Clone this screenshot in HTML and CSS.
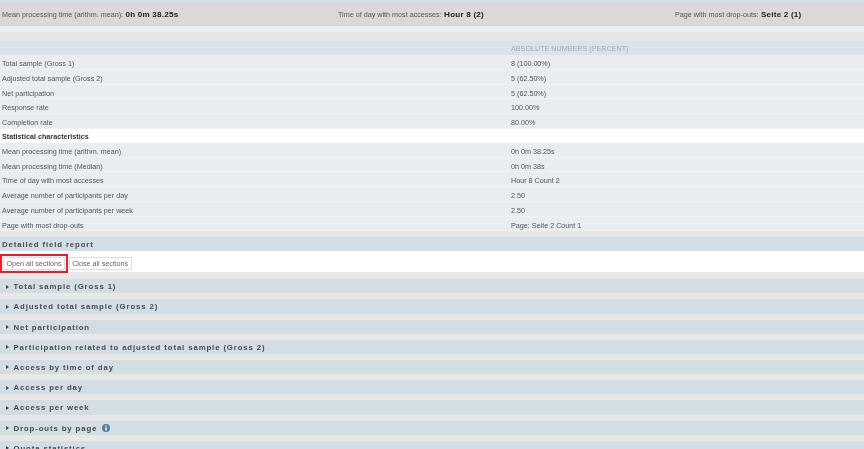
FILE: index.html
```html
<!DOCTYPE html>
<html lang="en">
<head>
<meta charset="utf-8">
<title>Field report</title>
<link rel="stylesheet" href="styles.css">
</head>
<body>
<div class="page">
  <div class="topline"></div>
  <div class="summary">
    <div class="sum s1">Mean processing time (arithm. mean): <b>0h 0m 38.25s</b></div>
    <div class="sum s2">Time of day with most accesses: <b>Hour 8 (2)</b></div>
    <div class="sum s3">Page with most drop-outs: <b>Seite 2 (1)</b></div>
  </div>
  <div class="band-a"></div>
  <div class="band-b"></div>
  <div class="row head"><span></span><span>ABSOLUTE NUMBERS (PERCENT)</span></div>
  <div class="row"><span>Total sample (Gross 1)</span><span>8 (100.00%)</span></div>
  <div class="row"><span>Adjusted total sample (Gross 2)</span><span>5 (62.50%)</span></div>
  <div class="row"><span>Net participation</span><span>5 (62.50%)</span></div>
  <div class="row"><span>Response rate</span><span>100.00%</span></div>
  <div class="row"><span>Completion rate</span><span>80.00%</span></div>
  <div class="row title"><span>Statistical characteristics</span></div>
  <div class="row"><span>Mean processing time (arithm. mean)</span><span>0h 0m 38.25s</span></div>
  <div class="row"><span>Mean processing time (Median)</span><span>0h 0m 38s</span></div>
  <div class="row"><span>Time of day with most accesses</span><span>Hour 8 Count 2</span></div>
  <div class="row"><span>Average number of participants per day</span><span>2.50</span></div>
  <div class="row"><span>Average number of participants per week</span><span>2.50</span></div>
  <div class="row"><span>Page with most drop-outs</span><span>Page: Seite 2 Count 1</span></div>
  <div class="bar report">Detailed field report</div>
  <div class="actions">
    <button class="btn marked">Open all sections</button>
    <button class="btn">Close all sections</button>
  </div>
  <div class="bar sec first"><i class="arrow"></i>Total sample (Gross 1)</div>
  <div class="bar sec"><i class="arrow"></i>Adjusted total sample (Gross 2)</div>
  <div class="bar sec"><i class="arrow"></i>Net participation</div>
  <div class="bar sec"><i class="arrow"></i>Participation related to adjusted total sample (Gross 2)</div>
  <div class="bar sec"><i class="arrow"></i>Access by time of day</div>
  <div class="bar sec"><i class="arrow"></i>Access per day</div>
  <div class="bar sec"><i class="arrow"></i>Access per week</div>
  <div class="bar sec"><i class="arrow"></i>Drop-outs by page
    <svg class="info" viewBox="0 0 10 10" width="8" height="8"><circle cx="5" cy="5" r="5" fill="#4f7f9c"/><rect x="4" y="4.2" width="2" height="4" fill="#e6eef3"/><rect x="4" y="1.8" width="2" height="1.5" fill="#e6eef3"/></svg>
  </div>
  <div class="bar sec"><i class="arrow"></i>Quota statistics</div>
</div>
</body>
</html>
```
FILE: styles.css
```css
html, body {
  margin: 0;
  padding: 0;
  height: 449px;
  overflow: hidden;
  background: #e8e8e8;
}
.page {
  font-family: "Liberation Sans", Arial, sans-serif;
  font-size: 7.2px;
  color: #555;
  filter: blur(0.45px);
}
.topline { height: 3px; background: #d5dfea; }
.summary {
  height: 23px;
  background: #d9d9d9;
  display: grid;
  grid-template-columns: 338px 337px 1fr;
  align-items: center;
  color: #555;
}
.sum { padding-left: 2px; white-space: nowrap; }
.s2 { padding-left: 0; }
.s3 { padding-left: 0; }
.sum b { font-size: 8.1px; color: #222; letter-spacing: 0.2px; margin-left: 0.5px; }
.band-a { height: 6px; background: #e9eef2; }
.band-b { height: 9px; background: #e6e6e6; }
.row {
  display: grid;
  grid-template-columns: 509px 1fr;
  height: 14.75px;
  line-height: 17px;
  box-sizing: border-box;
  background: #e9edf1;
  border-bottom: 1px solid #eff2f5;
  padding-left: 2px;
  white-space: nowrap;
}
.row span { min-width: 0; }
.row.head { background: #dbe3ea; border-bottom: 0; color: #a3a9b2; height: 14px; line-height: 15px; }
.row.title { background: #fff; border-bottom: 0; font-weight: bold; color: #333; height: 14px; line-height: 15px; }
.bar {
  background: #d2dde4;
  color: #4a4a4a;
  font-weight: bold;
  font-size: 7.8px;
  letter-spacing: 0.88px;
  height: 14.2px;
  line-height: 15px;
  white-space: nowrap;
}
.report { margin-top: 5.75px; padding-left: 2px; }
.actions {
  background: #fff;
  height: 21px;
  box-sizing: border-box;
  padding: 3px 0 0 3px;
  display: flex;
  align-items: center;
  gap: 3.5px;
}
.btn {
  font: inherit;
  font-size: 7.2px;
  color: #666;
  background: #fff;
  border: 1px solid #ddd;
  border-radius: 0;
  height: 13px;
  padding: 0 2.5px;
  margin: 0;
  line-height: 11px;
}
.marked { outline: 2px solid #ee1c25; outline-offset: 1px; }
.sec { margin-top: 6px; padding-left: 6px; line-height: 16px; }
.sec.first { margin-top: 7px; }
.arrow {
  display: inline-block;
  width: 0;
  height: 0;
  border-left: 3.5px solid #444;
  border-top: 2.5px solid transparent;
  border-bottom: 2.5px solid transparent;
  margin-right: 4.5px;
  vertical-align: 0.5px;
}
.info { vertical-align: -1.5px; margin-left: 2px; }
```
